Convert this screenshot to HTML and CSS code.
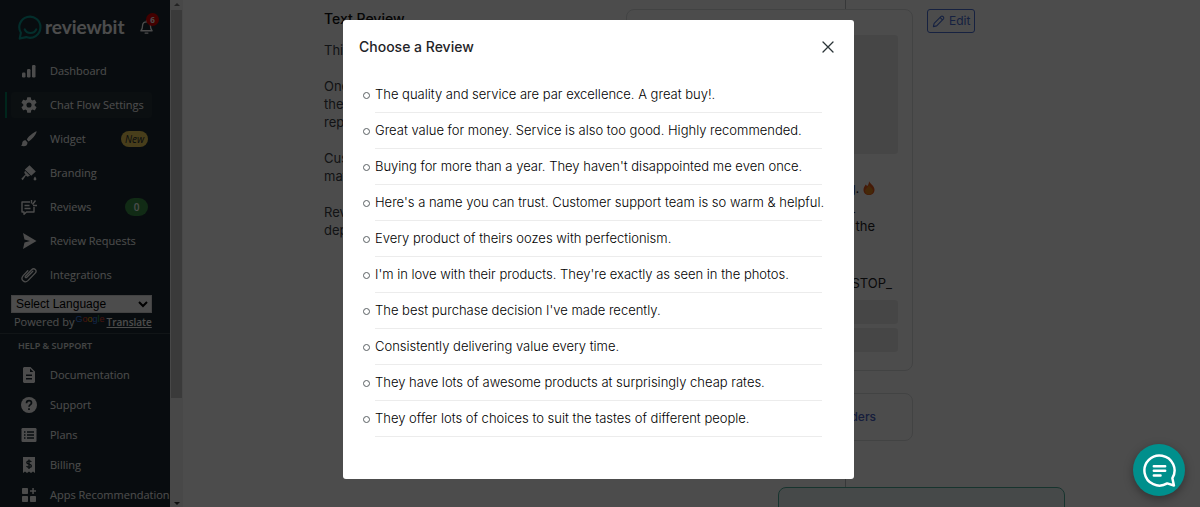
FILE: index.html
```
<!DOCTYPE html>
<html lang="en">
<head>
<meta charset="utf-8">
<title>Reviewbit - Chat Flow Settings</title>
<link rel="stylesheet" href="styles.css">
</head>
<body>
<div class="app">
  <aside class="sidebar">
    <div class="brand">
      <svg class="brand-mark" viewBox="0 0 26 26" fill="none" stroke="#0c9c93" stroke-width="2.2" stroke-linecap="round" stroke-linejoin="round"><path d="M1.800 24.500L3 18.500A11 11 0 1 1 8.500 23z"/><path d="M7 15c2 5 10 5 12 0"/></svg>
      <span class="brand-name">reviewbit</span>
      <button class="bell" type="button" aria-label="Notifications">
        <svg viewBox="0 0 16 16" fill="none" stroke="#fff" stroke-width="1.4" stroke-linejoin="round" stroke-linecap="round"><path d="M2 12h12c-1.600-1.300-1.800-2.500-1.800-5.500C12.200 3.800 10.500 2.500 8 2.500S3.800 3.800 3.800 6.500C3.800 9.500 3.600 10.700 2 12zM6.500 14.500h3M8 1v1"/></svg>
        <span class="bell-count">6</span>
      </button>
    </div>
    <nav class="nav">
      <a class="nav-item" href="#"><svg viewBox="0 0 16 16" fill="#fff"><rect x="1" y="9.500" width="3.500" height="5" rx="1.200"/><rect x="6" y="6" width="3.500" height="8.500" rx="1.200"/><rect x="11" y="2" width="3.500" height="12.500" rx="1.200"/></svg>Dashboard</a>
      <a class="nav-item active" href="#"><svg viewBox="2 2 20 20" fill="#fff"><path d="M19.140 12.940c.04-.3.060-.61.060-.94s-.02-.64-.07-.94l2.030-1.580a.49.49 0 0 0 .12-.61l-1.920-3.320a.49.49 0 0 0-.59-.22l-2.390.96a7 7 0 0 0-1.620-.94L14.400 2.810a.48.48 0 0 0-.48-.41h-3.840a.47.47 0 0 0-.47.410l-.36 2.540a7.400 7.400 0 0 0-1.620.940l-2.390-.96a.48.48 0 0 0-.59.220L2.740 8.870a.48.48 0 0 0 .12.610l2.030 1.580a6 6 0 0 0 0 1.880l-2.030 1.580a.49.49 0 0 0-.12.610l1.920 3.320c.12.220.37.290.59.220l2.390-.96c.5.380 1.030.700 1.620.940l.36 2.540c.05.240.240.410.480.410h3.840c.24 0 .44-.17.470-.41l.36-2.540a7 7 0 0 0 1.620-.94l2.390.96c.22.080.470 0 .59-.22l1.920-3.320a.48.48 0 0 0-.12-.61zM12 15.200a3.200 3.200 0 1 1 0-6.400 3.200 3.200 0 0 1 0 6.400z"/></svg>Chat Flow Settings</a>
      <a class="nav-item" href="#"><svg viewBox="0 0 16 16" fill="#fff"><path d="M15.700.3C12 1.500 7 6 5.800 8.600l1.700 1.900C10.500 9 15 4 15.700.3zM4.600 9.300C2.500 9 1.300 10.500 1.200 12.300c0 1.200-.5 1.800-1.200 2.200 2.800 1.700 6.800.7 6.500-3.100z"/></svg>Widget<em class="pill pill-new">New</em></a>
      <a class="nav-item" href="#"><svg viewBox="0 0 16 16" fill="#fff"><path d="M8.500.3l6.300 6.300-4.600 4.200-6.400-6.300zM4 5.800l5 5-2.600.9-1.500-1.300L1.700 15.200.3 13.800l4.300-4.500L3.200 8zM14 11.500c1.800 2.300 2 3.800 0 4-2-.2-1.800-1.700 0-4z"/></svg>Branding</a>
      <a class="nav-item" href="#"><svg viewBox="0 0 16 16" fill="none" stroke="#fff" stroke-width="1.400" stroke-linejoin="round"><path d="M9 3H1v10h2v2.300L5.500 13H13V8M3.500 6.500h5M3.500 9.500h6M10.500 4.500V1M11.500 5.500l3-4M12 6.500h4"/></svg>Reviews<span class="pill pill-count">0</span></a>
      <a class="nav-item" href="#"><svg viewBox="0 0 16 16" fill="#fff"><path d="M2 0l13.500 8L2 16l1.500-6.500L9 8 3.500 6.500z"/></svg>Review Requests</a>
      <a class="nav-item" href="#"><svg viewBox="0 0 16 16" fill="none" stroke="#fff" stroke-width="1.300" stroke-linecap="round"><path d="M11.800 4.300l-6 6c-1 1-2.200-.2-1.200-1.300l6-6.200c2.600-2.500 6 .7 3.600 3.300l-7 7.300c-3.600 3.500-8.400-.8-5-4.800l4.600-4.800"/></svg>Integrations</a>
    </nav>
    <div class="language">
      <select aria-label="Select Language"><option>Select Language</option></select>
      <div class="powered">Powered by <span class="google"><i class="g-blue">G</i><i class="g-red">o</i><i class="g-yellow">o</i><i class="g-blue">g</i><i class="g-green">l</i><i class="g-red">e</i></span> <a href="#">Translate</a></div>
    </div>
    <h2 class="nav-heading">HELP &amp; SUPPORT</h2>
    <nav class="nav nav-help">
      <a class="nav-item" href="#"><svg viewBox="0 0 16 16" fill="#fff" fill-rule="evenodd"><path d="M3 0h6.500L14 4.500V15l-1 1H3l-1-1V1zM9 1.500V5h3.500zM5 7.500V9h6V7.500zM5 11v1.500h6V11z"/></svg>Documentation</a>
      <a class="nav-item" href="#"><svg viewBox="0 0 16 16"><circle cx="8" cy="8" r="8" fill="#fff"/><path d="M5.500 6.300c0-3.600 5-3.200 5-.4C10.500 7.600 8 7.700 8 9.800M8 11.300v1.700" fill="none" stroke="#1b2b32" stroke-width="1.700"/></svg>Support</a>
      <a class="nav-item" href="#"><svg viewBox="0 0 16 16"><rect x=".5" y="1" width="15" height="14" rx="1.200" fill="#fff"/><path d="M3 5h1.500M6 5h7M3 8h1.500M6 8h7M3 11h1.500M6 11h7" stroke="#1b2b32" stroke-width="1.400"/></svg>Plans</a>
      <a class="nav-item" href="#"><svg viewBox="0 0 16 16"><path d="M2 0h12v16l-2-1.500L10 16l-2-1.500L6 16l-2-1.500L2 16z" fill="#fff"/><path d="M10.300 5C9.500 3.300 5.800 3.600 5.800 5.400c0 2.200 4.600 1.200 4.600 3.500 0 1.900-4 2-4.800.1M8 2.500v9.500" fill="none" stroke="#1b2b32" stroke-width="1.300"/></svg>Billing</a>
      <a class="nav-item" href="#"><svg viewBox="0 0 16 16" fill="#fff"><rect x="1" y="1" width="6" height="6" rx=".8"/><rect x="1" y="9" width="6" height="6" rx=".8"/><rect x="9" y="9" width="6" height="6" rx=".8"/><path d="M11.300 1h1.500v2.300H15v1.500h-2.200V7h-1.500V4.800H9V3.300h2.300z"/></svg>Apps Recommendation</a>
    </nav>
  </aside>
  <div class="scroll-track"><span class="arrow arrow-up"></span><span class="thumb"></span><span class="arrow arrow-down"></span></div>
  <main class="main">
    <section class="about">
      <h1>Text Review</h1>
      <p>This</p>
      <p>One<br>the<br>rep</p>
      <p>Cus<br>mat</p>
      <p>Rev<br>dep</p>
    </section>
    <section class="flow">
      <div class="flow-row">
        <article class="card">
          <div class="preview"></div>
          <p class="line line-fire">g. <svg viewBox="0 0 12 14"><path d="M6 0c.5 2.500 5.500 4.500 5.500 8.700C11.500 12 9 14 6 14S.5 12 .5 8.700C.5 6 2 5.500 2.500 3.500c1 .5 1.300 1 1.500 1.800C5.500 4 6 2 6 0z" fill="#e8591c"/><path d="M6 3.500c.3 2 4 3.700 4 6.300 0 2.300-1.800 3.700-4 3.700s-4-1.400-4-3.700C2 8 5.500 6.500 6 3.500z" fill="#e8861b"/></svg></p>
          <p class="line line-rule">_</p>
          <p class="line">the</p>
          <p class="line line-stop">STOP_</p>
          <div class="reply"></div>
          <div class="reply"></div>
        </article>
        <button class="edit" type="button"><svg viewBox="0 0 14 14" fill="none" stroke="#4a70d8" stroke-width="1.200" stroke-linejoin="round"><path d="M1.500 12.500l.8-3.500 7.500-7.500c1.500-1 3.500 1 2.600 2.600L5 11.700zM8.800 2.800l2.500 2.500"/></svg>Edit</button>
      </div>
      <a class="card card-link" href="#">ders</a>
      <div class="card card-next"></div>
    </section>
  </main>
</div>

<div class="overlay">
  <section class="modal" role="dialog" aria-labelledby="modal-title">
    <header class="modal-head">
      <h2 id="modal-title">Choose a Review</h2>
      <button class="close" type="button" aria-label="Close"><svg viewBox="0 0 12 12" stroke="#2b3438" stroke-width="1.300" stroke-linecap="round"><path d="M1 1l10 10M11 1L1 11"/></svg></button>
    </header>
    <ul class="reviews">
      <li>The quality and service are par excellence. A great buy!.</li>
      <li>Great value for money. Service is also too good. Highly recommended.</li>
      <li>Buying for more than a year. They haven't disappointed me even once.</li>
      <li>Here's a name you can trust. Customer support team is so warm &amp; helpful.</li>
      <li>Every product of theirs oozes with perfectionism.</li>
      <li>I'm in love with their products. They're exactly as seen in the photos.</li>
      <li>The best purchase decision I've made recently.</li>
      <li>Consistently delivering value every time.</li>
      <li>They have lots of awesome products at surprisingly cheap rates.</li>
      <li>They offer lots of choices to suit the tastes of different people.</li>
    </ul>
  </section>
</div>

<button class="chat" type="button" aria-label="Open chat"><svg viewBox="0 0 32 32" fill="none" stroke="#fff" stroke-width="2.400" stroke-linecap="round" stroke-linejoin="round"><path d="M28.500 23.500A14.600 14.600 0 1 0 23.500 28.500L30 30.500z"/><path d="M10.500 11.800h11M10.500 16.300h11M10.500 20.800h6.500"/></svg></button>
</body>
</html>
```
FILE: styles.css
```
* { box-sizing: border-box; }

body {
  margin: 0;
  overflow: hidden;
  background: #fff;
  color: #1f2427;
  font-family: Inter, "Liberation Sans", sans-serif;
  font-size: 13px;
  line-height: 18px;
}

h1, h2, p, ul { margin: 0; padding: 0; }
a { color: inherit; text-decoration: none; }
button { font: inherit; cursor: pointer; }

.app { display: flex; height: 100vh; overflow: hidden; }

/* Sidebar */
.sidebar {
  flex: 0 0 170px;
  overflow: hidden;
  background: #1b2b32;
  color: #fff;
  font-family: "Open Sans", "Noto Sans", sans-serif;
}

.brand { display: flex; align-items: center; height: 54px; padding-left: 18px; }
.brand-mark { width: 25px; height: 25px; margin-right: 2px; }
.brand-name { width: 93px; font: 700 19px/24px Lato, sans-serif; }

.bell { position: relative; width: 18px; height: 18px; padding: 1px; border: 0; background: none; }
.bell svg { display: block; width: 15px; height: 16px; }
.bell-count {
  position: absolute;
  top: -5px;
  right: -3px;
  width: 13px;
  height: 13px;
  border-radius: 50%;
  background: #e00000;
  color: #fff;
  font-size: 8px;
  font-weight: 700;
  line-height: 13px;
  text-align: center;
}

.nav { display: grid; gap: 8px; padding: 4px 18px 0 11px; }
.nav-item {
  position: relative;
  display: flex;
  align-items: center;
  height: 26px;
  padding: 0 4px 0 10px;
  border-radius: 3px;
  font-size: 11px;
  font-weight: 500;
  white-space: nowrap;
}
.nav-item svg { flex: none; width: 16px; height: 16px; margin-right: 13px; }
.nav-item.active { background: #263239; }
.nav-item.active::before {
  content: "";
  position: absolute;
  left: -6px;
  width: 2px;
  height: 26px;
  background: #008060;
}

.pill { margin-left: auto; border-radius: 8px; line-height: 16px; text-align: center; }
.pill-new { width: 27px; background: #f2cf5a; color: #1b2b32; font-size: 10px; font-weight: 400; }
.pill-count { width: 23px; border-radius: 9px; background: #3a8f48; font-size: 10px; line-height: 18px; font-weight: 600; }

.language { margin-top: 7px; padding: 0 18px 2px 11px; }
.language select {
  display: block;
  width: 100%;
  height: 18px;
  padding: 0;
  border: 1px solid #ddd;
  border-radius: 0;
  background: #fff;
  color: #000;
  font: 12px "Liberation Sans", sans-serif;
}
.powered { display: flex; padding-left: 3px; font-size: 11px; line-height: 18px; white-space: nowrap; }
.powered a { font-size: 10px; font-weight: 600; text-decoration: underline; }
.google { margin: 0 2px 0 1px; font: 9px/12px "Liberation Sans", sans-serif; }
.google i { font-style: normal; }
.g-blue { color: #4285f4; }
.g-red { color: #ea4335; }
.g-yellow { color: #fbbc05; }
.g-green { color: #34a853; }

.nav-heading {
  padding: 3px 18px 0;
  border-top: 1px solid #3a474d;
  color: #e4e6e8;
  font-size: 9px;
  font-weight: 600;
  line-height: 18px;
}
.nav-help { gap: 4px; padding: 7px 0 0 11px; }
.nav-help .nav-item { padding-right: 0; }

.scroll-track {
  display: flex;
  flex: 0 0 13px;
  flex-direction: column;
  align-items: center;
  gap: 4px;
  padding: 2px 0;
  background: #f1f1f1;
}
.thumb { width: 11px; height: 388px; background: #c1c1c1; }
.arrow { border: 3px solid transparent; }
.arrow-up { border-bottom-color: #777; border-top-width: 0; margin-top: 1px; }
.arrow-down { margin-top: auto; border-top-color: #333; border-bottom-width: 0; }

/* Page */
.main { display: flex; flex: 1; padding-left: 141px; }
.about { flex: 0 0 302px; padding-top: 10px; color: #3c4246; }
.about h1 { margin-bottom: 13px; color: #111; font-size: 14px; font-weight: 500; }
.about p { margin-bottom: 18px; }

.flow { position: relative; flex: 1; padding-top: 9px; }
.flow::before {
  content: "";
  position: absolute;
  top: 0;
  bottom: 0;
  left: 219px;
  width: 1px;
  background: #b9bdc0;
}
.card {
  position: relative;
  width: 287px;
  padding: 25px 14px 18px;
  border: 1px solid #dcdfe1;
  border-radius: 8px;
  background: #fff;
}
.flow-row { display: flex; align-items: flex-start; gap: 14px; }
.preview { height: 119px; margin-bottom: 25px; border-radius: 3px; background: #ececec; }
.line { padding-right: 23px; font-size: 13px; line-height: 19px; text-align: right; }
.line-fire svg { width: 12px; height: 14px; vertical-align: -2px; }
.line-rule { padding-right: 43px; }
.line-stop { margin: 38px 0 7px; padding-right: 6px; }
.reply { height: 24px; margin-bottom: 4px; border-radius: 3px; background: #ececec; }
.reply:last-child { margin-bottom: 0; }

.edit {
  display: flex;
  align-items: center;
  gap: 4px;
  height: 24px;
  padding: 0 4px;
  border: 1px solid #4a70d8;
  border-radius: 3px;
  background: none;
  color: #4a70d8;
  font-size: 12px;
}
.edit svg { width: 13px; height: 13px; }

.card-link {
  display: block;
  margin-top: 22px;
  padding: 14px 36px 14px 0;
  color: #4a62c8;
  font-size: 12px;
  font-weight: 500;
  text-align: right;
}
.card-next {
  height: 80px;
  margin: 46px 0 0 152px;
  border-color: #4fae9c;
  background: #ecf6f4;
}

/* Modal */
.overlay {
  position: fixed;
  inset: 0;
  display: flex;
  align-items: flex-start;
  justify-content: center;
  padding: 20px 3px 20px 0;
  background: rgba(0, 0, 0, .7);
}
.modal {
  width: 511px;
  max-width: 100%;
  padding: 16px 32px 42px 16px;
  border-radius: 3px;
  background: #fff;
}
.modal-head { display: flex; align-items: center; justify-content: space-between; margin: 0 -16px 19px 0; }
.modal-head h2 { font-size: 14px; font-weight: 500; line-height: 22px; }
.close { width: 20px; height: 20px; padding: 4px; border: 0; background: none; }
.close svg { display: block; width: 12px; height: 12px; }
.reviews { list-style: none; }
.reviews li {
  position: relative;
  height: 36px;
  margin-left: 16px;
  padding-top: 8px;
  border-bottom: 1px solid #ececec;
  color: #000;
  font-weight: 300;
  white-space: nowrap;
}
.reviews li::before {
  content: "";
  position: absolute;
  top: 15px;
  left: -12px;
  width: 5px;
  height: 5px;
  border: 1px solid #5a6063;
  border-radius: 50%;
}

.chat {
  position: fixed;
  right: 15px;
  bottom: 11px;
  display: grid;
  place-items: center;
  width: 52px;
  height: 52px;
  padding: 0;
  border: 0;
  border-radius: 50%;
  background: #008f8c;
  box-shadow: 0 3px 10px rgba(0, 0, 0, .35);
}
.chat svg { width: 33px; height: 33px; }
```
